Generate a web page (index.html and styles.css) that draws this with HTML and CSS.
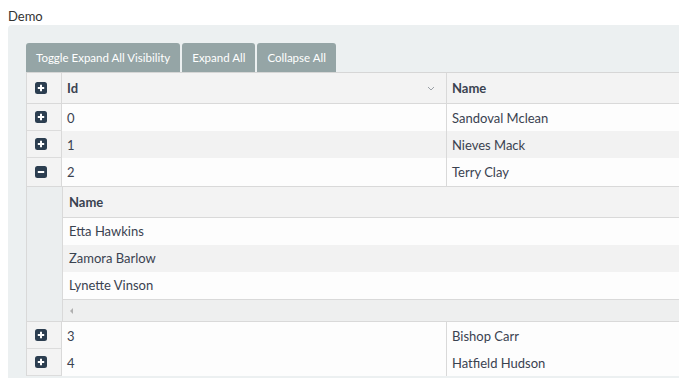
FILE: index.html
```html
<!DOCTYPE html>
<html>
<head>
<meta charset="utf-8">
<link rel="stylesheet" href="styles.css">
</head>
<body>
<div class="title">Demo</div>
<div class="panel">
  <div class="toolbar">
    <button class="btn">Toggle Expand All Visibility</button>
    <button class="btn">Expand All</button>
    <button class="btn">Collapse All</button>
  </div>
  <div class="grid">
    <div class="row head">
      <div class="exp"><svg class="ico" viewBox="0 0 12 12"><rect x="0" y="0" width="12" height="12" rx="2.5" fill="#2c3e50"/><path d="M6 2.8v6.4M2.8 6h6.4" stroke="#fff" stroke-width="2"/></svg></div>
      <div class="cell id">Id<svg class="chev" viewBox="0 0 8 5"><path d="M1 1l3 3 3-3" fill="none" stroke="#9aa0a6" stroke-width="1"/></svg></div>
      <div class="cell name">Name</div>
    </div>
    <div class="row">
      <div class="exp"><svg class="ico" viewBox="0 0 12 12"><rect x="0" y="0" width="12" height="12" rx="2.5" fill="#2c3e50"/><path d="M6 2.8v6.4M2.8 6h6.4" stroke="#fff" stroke-width="2"/></svg></div>
      <div class="cell id">0</div>
      <div class="cell name">Sandoval Mclean</div>
    </div>
    <div class="row alt">
      <div class="exp"><svg class="ico" viewBox="0 0 12 12"><rect x="0" y="0" width="12" height="12" rx="2.5" fill="#2c3e50"/><path d="M6 2.8v6.4M2.8 6h6.4" stroke="#fff" stroke-width="2"/></svg></div>
      <div class="cell id">1</div>
      <div class="cell name">Nieves Mack</div>
    </div>
    <div class="row last">
      <div class="exp"><svg class="ico" viewBox="0 0 12 12"><rect x="0" y="0" width="12" height="12" rx="2.5" fill="#2c3e50"/><path d="M2.8 6h6.4" stroke="#fff" stroke-width="2"/></svg></div>
      <div class="cell id">2</div>
      <div class="cell name">Terry Clay</div>
    </div>
    <div class="detail">
      <div class="detail-side"></div>
      <div class="sub">
        <div class="subrow subhead">Name</div>
        <div class="subrow">Etta Hawkins</div>
        <div class="subrow alt">Zamora Barlow</div>
        <div class="subrow lastsub">Lynette Vinson</div>
        <div class="scroll"><span class="arrow"></span></div>
      </div>
    </div>
    <div class="row">
      <div class="exp"><svg class="ico" viewBox="0 0 12 12"><rect x="0" y="0" width="12" height="12" rx="2.5" fill="#2c3e50"/><path d="M6 2.8v6.4M2.8 6h6.4" stroke="#fff" stroke-width="2"/></svg></div>
      <div class="cell id">3</div>
      <div class="cell name">Bishop Carr</div>
    </div>
    <div class="row">
      <div class="exp"><svg class="ico" viewBox="0 0 12 12"><rect x="0" y="0" width="12" height="12" rx="2.5" fill="#2c3e50"/><path d="M6 2.8v6.4M2.8 6h6.4" stroke="#fff" stroke-width="2"/></svg></div>
      <div class="cell id">4</div>
      <div class="cell name">Hatfield Hudson</div>
    </div>
  </div>
</div>
</body>
</html>
```

FILE: styles.css
```css
html { overflow: hidden; }
body {
  margin: 8px 0 0 8px;
  font-family: Lato, "Liberation Sans", sans-serif;
  font-size: 13px;
  color: #333;
  background: #fff;
}
.title {
  height: 17px;
  line-height: 17px;
  font-size: 13px;
  color: #333;
}
.panel {
  height: 400px;
  background: #ecf0f1;
  border-radius: 4px 0 0 0;
  padding: 18px 0 0 18px;
  box-sizing: border-box;
  overflow: hidden;
}
.toolbar {
  display: flex;
  gap: 2px;
  height: 29px;
}
.btn {
  font-family: Lato, "Liberation Sans", sans-serif;
  font-size: 11.5px;
  color: #fff;
  background: #95a5a6;
  border: none;
  border-radius: 3px 3px 0 0;
  padding: 0 10px;
  height: 29px;
  line-height: 29px;
}
.grid {
  width: 820px;
  border-top: 1px solid #d6d6d6;
  border-left: 1px solid #d9d9d9;
  color: #3a4250;
}
.row {
  display: flex;
  height: 27px;
  background: #fdfdfd;
}
.row.alt { background: #f2f2f2; }
.row.head {
  height: 30px;
  background: #f3f3f3;
  border-bottom: 1px solid #d9d9d9;
  font-weight: bold;
}
.row.last { height: 28px; border-bottom: 1px solid #d9d9d9; }
.exp {
  width: 35px;
  flex: none;
  background: #f3f3f3;
  border-right: 1px solid #d9d9d9;
  border-bottom: 1px solid #dcdcdc;
  box-sizing: border-box;
  display: flex;
  align-items: center;
  padding-left: 8px;
}
.row.head .exp, .row.last .exp { border-bottom: none; }
.ico { width: 12px; height: 12px; display: block; }
.cell {
  display: flex;
  align-items: center;
  padding-left: 5px;
  box-sizing: border-box;
}
.cell.id {
  width: 385px;
  flex: none;
  border-right: 1px solid #d9d9d9;
  position: relative;
}
.chev {
  position: absolute;
  right: 11px;
  top: 13px;
  width: 8px;
  height: 5px;
}
.cell.name { flex: 1; }
.detail {
  display: flex;
  height: 134px;
  border-bottom: 1px solid #d9d9d9;
}
.detail-side {
  width: 36px;
  flex: none;
  background: #ebeeef;
  border-right: 1px solid #d9d9d9;
  box-sizing: border-box;
}
.sub { flex: 1; display: flex; flex-direction: column; }
.subrow {
  height: 27px;
  line-height: 27px;
  padding-left: 6px;
  background: #fdfdfd;
}
.subrow.alt { background: #f2f2f2; }
.subrow.subhead {
  height: 30px;
  line-height: 30px;
  font-weight: bold;
  background: #f3f3f3;
  border-bottom: 1px solid #d9d9d9;
}
.subrow.lastsub { border-bottom: 1px solid #d9d9d9; }
.scroll {
  flex: 1;
  background: #eeefef;
  display: flex;
  align-items: center;
  padding-left: 7px;
}
.arrow {
  width: 0;
  height: 0;
  border-top: 3px solid transparent;
  border-bottom: 3px solid transparent;
  border-right: 3px solid #b0b0b0;
}
```
